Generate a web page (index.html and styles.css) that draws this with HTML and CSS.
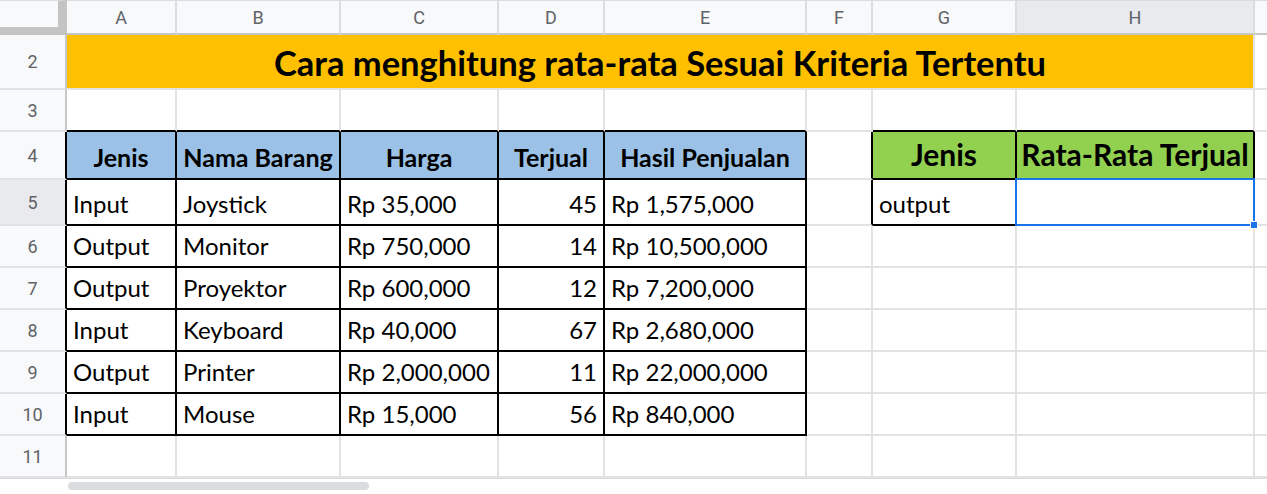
FILE: index.html
```html
<!DOCTYPE html>
<html>
<head>
<meta charset="utf-8">
<title>Sheet</title>
<link rel="stylesheet" href="styles.css">
</head>
<body>
<div class="sheet">
  <div class="row rhdr">
    <div class="corner"></div>
    <div class="colh ca">A</div>
    <div class="colh cb">B</div>
    <div class="colh cc">C</div>
    <div class="colh cd">D</div>
    <div class="colh ce">E</div>
    <div class="colh cf">F</div>
    <div class="colh cg">G</div>
    <div class="colh chh sel">H</div>
    <div class="colh ci"></div>
  </div>

  <div class="row r2">
    <div class="rowh">2</div>
    <div class="cell title">Cara menghitung rata-rata Sesuai Kriteria Tertentu</div>
    <div class="cell ci"></div>
  </div>

  <div class="row r3">
    <div class="rowh">3</div>
    <div class="cell ca tt"></div>
    <div class="cell cb tt"></div>
    <div class="cell cc tt"></div>
    <div class="cell cd tt"></div>
    <div class="cell ce tt"></div>
    <div class="cell cf"></div>
    <div class="cell cg tt"></div>
    <div class="cell chh tt"></div>
    <div class="cell ci"></div>
  </div>

  <div class="row r4">
    <div class="rowh tl">4</div>
    <div class="cell ca t th">Jenis</div>
    <div class="cell cb t th">Nama Barang</div>
    <div class="cell cc t th">Harga</div>
    <div class="cell cd t th">Terjual</div>
    <div class="cell ce t th">Hasil Penjualan</div>
    <div class="cell cf tr"></div>
    <div class="cell cg t gh">Jenis</div>
    <div class="cell chh t gh">Rata-Rata Terjual</div>
    <div class="cell ci"></div>
  </div>

  <div class="row r5">
    <div class="rowh tl sel">5</div>
    <div class="cell ca t">Input</div>
    <div class="cell cb t">Joystick</div>
    <div class="cell cc t">Rp 35,000</div>
    <div class="cell cd t num">45</div>
    <div class="cell ce t">Rp 1,575,000</div>
    <div class="cell cf tr"></div>
    <div class="cell cg t">output</div>
    <div class="cell chh t active"><span class="handle"></span></div>
    <div class="cell ci"></div>
  </div>

  <div class="row rn">
    <div class="rowh tl">6</div>
    <div class="cell ca t">Output</div>
    <div class="cell cb t">Monitor</div>
    <div class="cell cc t">Rp 750,000</div>
    <div class="cell cd t num">14</div>
    <div class="cell ce t">Rp 10,500,000</div>
    <div class="cell cf"></div>
    <div class="cell cg"></div>
    <div class="cell chh"></div>
    <div class="cell ci"></div>
  </div>

  <div class="row rn">
    <div class="rowh tl">7</div>
    <div class="cell ca t">Output</div>
    <div class="cell cb t">Proyektor</div>
    <div class="cell cc t">Rp 600,000</div>
    <div class="cell cd t num">12</div>
    <div class="cell ce t">Rp 7,200,000</div>
    <div class="cell cf"></div>
    <div class="cell cg"></div>
    <div class="cell chh"></div>
    <div class="cell ci"></div>
  </div>

  <div class="row rn">
    <div class="rowh tl">8</div>
    <div class="cell ca t">Input</div>
    <div class="cell cb t">Keyboard</div>
    <div class="cell cc t">Rp 40,000</div>
    <div class="cell cd t num">67</div>
    <div class="cell ce t">Rp 2,680,000</div>
    <div class="cell cf"></div>
    <div class="cell cg"></div>
    <div class="cell chh"></div>
    <div class="cell ci"></div>
  </div>

  <div class="row rn">
    <div class="rowh tl">9</div>
    <div class="cell ca t">Output</div>
    <div class="cell cb t">Printer</div>
    <div class="cell cc t">Rp 2,000,000</div>
    <div class="cell cd t num">11</div>
    <div class="cell ce t">Rp 22,000,000</div>
    <div class="cell cf"></div>
    <div class="cell cg"></div>
    <div class="cell chh"></div>
    <div class="cell ci"></div>
  </div>

  <div class="row rn">
    <div class="rowh tl">10</div>
    <div class="cell ca t">Input</div>
    <div class="cell cb t">Mouse</div>
    <div class="cell cc t">Rp 15,000</div>
    <div class="cell cd t num">56</div>
    <div class="cell ce t">Rp 840,000</div>
    <div class="cell cf"></div>
    <div class="cell cg"></div>
    <div class="cell chh"></div>
    <div class="cell ci"></div>
  </div>

  <div class="row rn">
    <div class="rowh">11</div>
    <div class="cell ca"></div>
    <div class="cell cb"></div>
    <div class="cell cc"></div>
    <div class="cell cd"></div>
    <div class="cell ce"></div>
    <div class="cell cf"></div>
    <div class="cell cg"></div>
    <div class="cell chh"></div>
    <div class="cell ci"></div>
  </div>

  <div class="scrollbar">
    <div class="thumb"></div>
  </div>
</div>
</body>
</html>
```

FILE: styles.css
```css
html, body {
  margin: 0;
  padding: 0;
  background: #ffffff;
}
body {
  font-family: Lato, "Liberation Sans", sans-serif;
  overflow: hidden;
}
.sheet {
  width: 1267px;
  height: 494px;
  overflow: hidden;
  display: flex;
  flex-direction: column;
}
.row {
  display: flex;
  flex: none;
}
.rhdr { height: 35px; }
.r2 { height: 55px; }
.r3 { height: 42px; }
.r4 { height: 48px; }
.r5 { height: 46px; }
.rn { height: 42px; }

.ca { width: 110px; }
.cb { width: 164px; }
.cc { width: 158px; }
.cd { width: 106px; }
.ce { width: 202px; }
.cf { width: 66px; }
.cg { width: 144px; }
.chh { width: 238px; }
.ci { width: 12px; }

.corner {
  box-sizing: border-box;
  width: 67px;
  height: 35px;
  flex: none;
  background: #f8f9fa;
  border-top: 1px solid #dadce0;
  border-right: 9px solid #c4c4c4;
  border-bottom: 8px solid #c4c4c4;
}
.colh {
  box-sizing: border-box;
  flex: none;
  height: 35px;
  background: #f8f9fa;
  border-top: 1px solid #dadce0;
  border-right: 2px solid #dadce0;
  border-bottom: 2px solid #c4c7c5;
  display: flex;
  align-items: center;
  justify-content: center;
  font-family: Roboto, "Liberation Sans", sans-serif;
  font-size: 18px;
  color: #5f6368;
}
.colh.ci { border-right: none; }
.colh.sel,
.rowh.sel {
  background: #e8eaed;
}
.rowh {
  box-sizing: border-box;
  flex: none;
  width: 67px;
  background: #f8f9fa;
  border-right: 2px solid #c4c7c5;
  border-bottom: 2px solid #e2e2e2;
  display: flex;
  align-items: center;
  justify-content: center;
  font-family: Roboto, "Liberation Sans", sans-serif;
  font-size: 18px;
  color: #5f6368;
}
.rowh.tl { border-right-color: #000; }

.cell {
  box-sizing: border-box;
  flex: none;
  border-right: 2px solid #e2e2e2;
  border-bottom: 2px solid #e2e2e2;
  display: flex;
  align-items: flex-end;
  padding: 0 6px 6px;
  white-space: nowrap;
  overflow: hidden;
  font-size: 24px;
  line-height: 28px;
  color: #000;
}
.cell.ci { border-right: none; }

.title {
  width: 1188px;
  background: #ffc000;
  justify-content: center;
  align-items: center;
  padding: 3px 0 0;
  font-weight: 700;
  font-size: 34.5px;
}
.tt { border-bottom-color: #000; }
.tr { border-right-color: #000; }
.t {
  border-right-color: #000;
  border-bottom-color: #000;
}
.th {
  background: #9bc2e6;
  font-weight: 700;
  font-size: 25px;
  justify-content: center;
  padding: 0 2px 7px;
}
.gh {
  background: #92d050;
  font-weight: 700;
  font-size: 30px;
  justify-content: center;
  padding: 0 1px 10px;
}
.num { justify-content: flex-end; }

.active {
  position: relative;
  overflow: visible;
}
.active::after {
  content: "";
  position: absolute;
  left: -2px;
  top: -2px;
  right: -2px;
  bottom: -2px;
  border: 2px solid #1a73e8;
  pointer-events: none;
}
.handle {
  position: absolute;
  right: -5px;
  bottom: -5px;
  width: 6px;
  height: 6px;
  background: #1a73e8;
  border: 1px solid #fff;
  z-index: 2;
}

.scrollbar {
  box-sizing: border-box;
  flex: none;
  height: 16px;
  border-top: 1px solid #dadce0;
  background: #ffffff;
  padding: 3px 0 0 68px;
}
.thumb {
  width: 301px;
  height: 8px;
  border-radius: 4px;
  background: #dadce0;
}
```
